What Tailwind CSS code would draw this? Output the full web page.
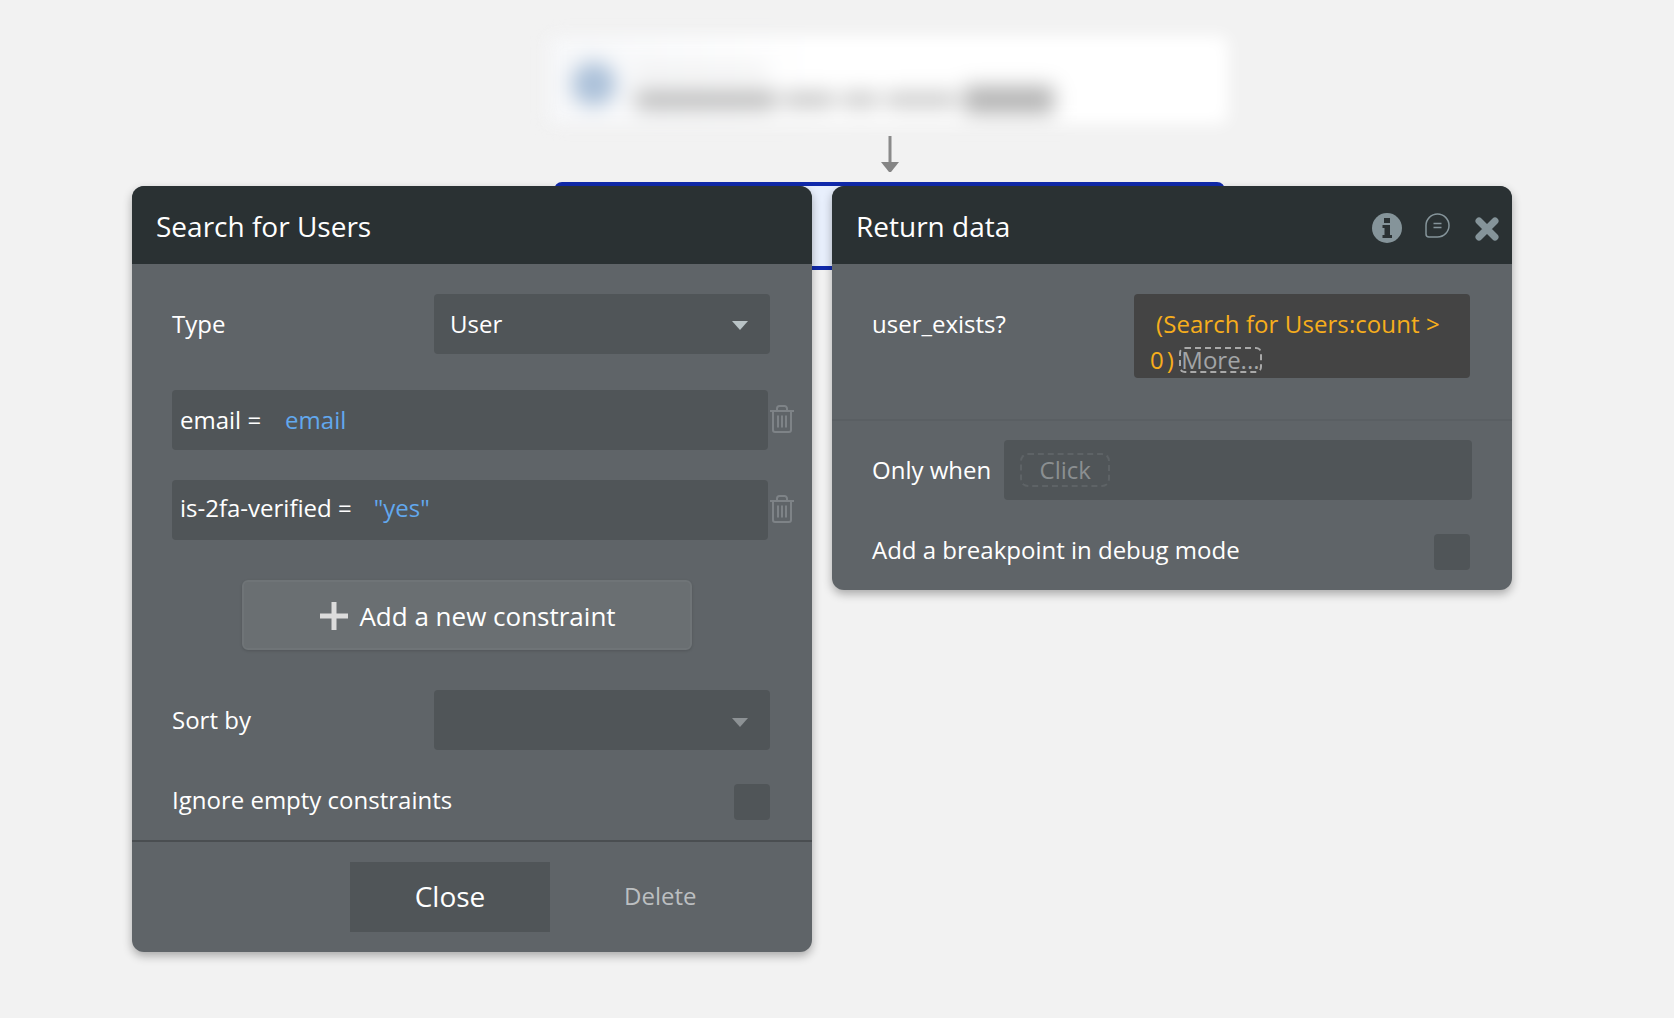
<!DOCTYPE html>
<html lang="en">
<head>
  <meta charset="UTF-8" />
  <title>Search for Users</title>
  <script src="https://cdn.jsdelivr.net/npm/@tailwindcss/browser@4"></script>
</head>
<body class="bg-[#f2f2f2] font-['Open_Sans',sans-serif] text-white">
  <div class="relative w-[1674px] h-[1018px] overflow-hidden">

    <!-- previous step, blurred -->
    <div class="absolute left-[548px] top-[36px] w-[680px] h-[88px] rounded-lg bg-linear-to-r from-[#f6f7f9] to-white to-[40%] blur-[8px] overflow-hidden">
      <div class="flex items-center gap-5 pl-6 pt-[18px] blur-[7px]">
        <div class="w-11 h-11 rounded-full bg-[#a9bfd8]"></div>
        <div class="flex flex-col gap-3 pt-3">
          <div class="w-[130px] h-2 bg-[#ececec]"></div>
          <div class="flex gap-2 items-center">
            <div class="w-[140px] h-5 bg-[#bcbcbc]"></div>
            <div class="w-[50px] h-4 bg-[#c4c4c4]"></div>
            <div class="w-[36px] h-4 bg-[#c8c8c8]"></div>
            <div class="w-[70px] h-4 bg-[#c8c8c8]"></div>
            <div class="w-[90px] h-7 bg-[#b4b4b4]"></div>
          </div>
        </div>
      </div>
    </div>

    <!-- arrow -->
    <svg class="absolute left-[880px] top-[135px]" width="20" height="38" viewBox="0 0 20 38">
      <path d="M10 1v28" stroke="#8a8a8a" stroke-width="3" />
      <path d="M1 27h18l-8 10h-2z" fill="#858585" />
    </svg>

    <!-- selected step behind the windows -->
    <div class="absolute left-[554px] top-[182px] w-[671px] h-[88px] rounded-lg border-4 border-[#1029ab] bg-[#e8effc]"></div>

    <!-- Search for Users -->
    <div class="absolute left-[132px] top-[186px] w-[680px] h-[766px] rounded-xl overflow-hidden bg-[#5f6468] shadow-[0_4px_10px_rgba(0,0,0,0.3)] flex flex-col text-[24px]">
      <div class="h-[78px] shrink-0 bg-[#2a3133] flex items-center pl-6 pt-0.5 text-[28px]">Search for Users</div>
      <div class="pl-10 pr-[42px] pt-[30px]">
        <div class="flex items-center justify-between h-[60px]">
          <span>Type</span>
          <div class="w-[336px] h-full rounded-sm bg-[#505558] flex items-center justify-between pl-4 pr-[22px]">
            <span>User</span>
            <svg class="mt-0.5" width="16" height="11" viewBox="0 0 16 11"><path d="M0 1h16l-8 9z" fill="#b9c3c6" /></svg>
          </div>
        </div>
        <div class="flex items-center mt-[36px] h-[60px]">
          <div class="w-[596px] shrink-0 h-full rounded-sm bg-[#505558] flex items-center pl-2">
            <span>email =</span><span class="ml-6 text-[#62a8ee]">email</span>
          </div>
          <svg class="ml-px shrink-0 -mt-0.5" width="26" height="28" viewBox="0 0 26 28" fill="none" stroke="#7e8387" stroke-width="2">
            <path d="M1 6h24M8 6V3.500a2.500 2.500 0 0 1 2.500-2.500h5a2.500 2.500 0 0 1 2.500 2.500V6M4 6v19a2 2 0 0 0 2 2h14a2 2 0 0 0 2-2V6M9 10.500v12M13 10.500v12M17 10.500v12" />
          </svg>
        </div>
        <div class="flex items-center mt-[30px] h-[60px]">
          <div class="w-[596px] shrink-0 h-full rounded-sm bg-[#505558] flex items-center pl-2 pb-1">
            <span>is-2fa-verified =</span><span class="ml-[22px] text-[#62a8ee]">"yes"</span>
          </div>
          <svg class="ml-px shrink-0 -mt-0.5" width="26" height="28" viewBox="0 0 26 28" fill="none" stroke="#7e8387" stroke-width="2">
            <path d="M1 6h24M8 6V3.500a2.500 2.500 0 0 1 2.500-2.500h5a2.500 2.500 0 0 1 2.500 2.500V6M4 6v19a2 2 0 0 0 2 2h14a2 2 0 0 0 2-2V6M9 10.500v12M13 10.500v12M17 10.500v12" />
          </svg>
        </div>
        <div class="ml-[70px] mt-[40px] w-[450px] h-[70px] rounded-md border-2 border-[#6f7477] bg-[#6a6f72] shadow-[0_1px_3px_rgba(0,0,0,0.15)] flex items-center justify-center gap-[11px] pl-0.5 text-[26px]">
          <svg class="mt-0.5" width="28" height="28" viewBox="0 0 28 28"><path d="M11.500 0h5v11.500H28v5H16.500V28h-5V16.500H0v-5h11.500z" fill="#dcdcdc" /></svg>
          <span class="mt-0.5">Add a new constraint</span>
        </div>
        <div class="flex items-center justify-between h-[60px] mt-[40px]">
          <span>Sort by</span>
          <div class="w-[336px] h-full rounded-sm bg-[#505558] flex items-center justify-end pr-[22px] pt-[4px]">
            <svg width="16" height="11" viewBox="0 0 16 11"><path d="M0 1h16l-8 9z" fill="#8d9295" /></svg>
          </div>
        </div>
        <div class="flex items-center justify-between h-[36px] mt-[34px]">
          <span class="-mt-1">Ignore empty constraints</span>
          <div class="w-9 h-9 rounded-sm bg-[#505558]"></div>
        </div>
      </div>
      <div class="mt-5 h-0.5 bg-[#4a4e51]"></div>
      <div class="flex items-center mt-5 ml-[218px]">
        <div class="w-[200px] h-[70px] bg-[#505558] flex items-center justify-center pb-0.5 text-[28px]">Close</div>
        <div class="ml-[74px] -mt-0.5 text-[#bcbfc1]">Delete</div>
      </div>
    </div>

    <!-- Return data -->
    <div class="absolute left-[832px] top-[186px] w-[680px] h-[404px] rounded-xl overflow-hidden bg-[#5f6468] shadow-[0_4px_10px_rgba(0,0,0,0.3)] flex flex-col text-[24px]">
      <div class="h-[78px] shrink-0 bg-[#2a3133] flex items-center pl-6 pt-0.5 text-[28px]">
        <span>Return data</span>
        <svg class="ml-auto mt-1" width="30" height="30" viewBox="0 0 30 30">
          <circle cx="15" cy="15" r="15" fill="#85949a" />
          <path d="M12 5h6v5h-6zM10.500 12h7.500v10h2v3h-9.500v-3h2v-7h-2z" fill="#2a3133" />
        </svg>
        <svg class="ml-[23px] -mt-0.5" width="25" height="25" viewBox="0 0 25 25" fill="none" stroke="#85949a" stroke-width="1.500">
          <path d="M1 12.500a11.500 11.500 0 1 1 11.500 11.500H4a3 3 0 0 1-3-3z" />
          <path d="M8.500 10.500h8M8.500 14.500h8" />
        </svg>
        <svg class="ml-[25px] mr-[13px] mt-[5px]" width="24" height="24" viewBox="0 0 24 24" stroke="#85949a" stroke-width="7" stroke-linecap="round">
          <path d="M4 4l16 16M20 4L4 20" />
        </svg>
      </div>
      <div class="pl-10 pr-[42px] pt-[30px] h-[157px] shrink-0 border-b-2 border-[#5a5f63] flex justify-between items-start">
        <span class="mt-3">user_exists?</span>
        <div class="w-[336px] h-[84px] rounded-sm bg-[#444444] pl-4 pt-3 leading-[36px] text-[#f7ae1c] tracking-[0.08px]">
          <span class="ml-[6px]">(Search for Users:count &gt;</span><br />
          <span>0<span class="ml-[3px]">)</span></span>
          <span class="-ml-px inline-block leading-[22px] tracking-normal rounded-md border-2 border-dashed border-[#a9a9a9] text-[#a2a5a7]">More...</span>
        </div>
      </div>
      <div class="flex items-center pl-10 pr-10 pt-[19px]">
        <span>Only when</span>
        <div class="ml-[13px] flex-1 h-[60px] rounded-sm bg-[#505558] flex items-center pl-[16px]">
          <div class="w-[90px] h-[34px] rounded-lg border-2 border-dashed border-[#5e6366] text-[#8b8f91] flex items-center justify-center">Click</div>
        </div>
      </div>
      <div class="flex items-center justify-between pl-10 pr-[42px] mt-[34px]">
        <span class="-mt-1">Add a breakpoint in debug mode</span>
        <div class="w-9 h-9 rounded-sm bg-[#505558]"></div>
      </div>
    </div>
  </div>
</body>
</html>
